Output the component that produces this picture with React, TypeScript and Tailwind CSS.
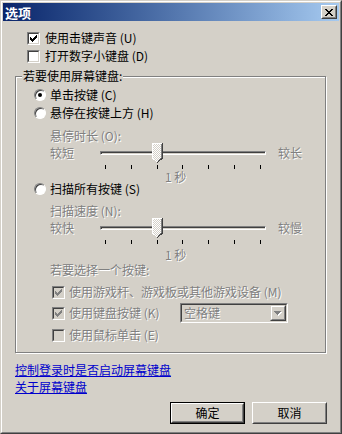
import React from 'react';

const dis = 'text-[#808080] [text-shadow:1px_1px_0_#fff]';

function Check({ checked, disabled }: { checked?: boolean; disabled?: boolean }) {
  const cols = [2, 3, 4, 3, 2, 1, 0];
  return (
    <div className="w-[13px] h-[13px] shrink-0 border border-t-[#808080] border-l-[#808080] border-r-white border-b-white">
      <div
        className={`w-full h-full flex items-center justify-center border border-t-[#404040] border-l-[#404040] border-r-[#d4d0c8] border-b-[#d4d0c8] ${disabled ? 'bg-[#d4d0c8]' : 'bg-white'}`}
      >
        {checked && (
          <svg width="7" height="7" viewBox="0 0 7 7" shapeRendering="crispEdges">
            {cols.map((y, x) => (
              <rect key={x} x={x} y={y} width="1" height="3" fill={disabled ? '#808080' : '#000'} />
            ))}
          </svg>
        )}
      </div>
    </div>
  );
}

function Radio({ on }: { on?: boolean }) {
  return (
    <div className="w-[12px] h-[12px] shrink-0 rounded-full bg-white border border-t-[#808080] border-l-[#808080] border-r-white border-b-white shadow-[inset_1px_1px_0_#404040] flex items-center justify-center">
      {on && <div className="w-[4px] h-[4px] rounded-full bg-black" />}
    </div>
  );
}

function Thumb() {
  return (
    <svg width="11" height="20" viewBox="0 0 11 20" shapeRendering="crispEdges">
      <defs>
        <pattern id="dither" width="2" height="2" patternUnits="userSpaceOnUse">
          <rect width="2" height="2" fill="#d4d0c8" />
          <rect width="1" height="1" fill="#fff" />
          <rect x="1" y="1" width="1" height="1" fill="#fff" />
        </pattern>
      </defs>
      <path d="M0 0 H11 V15 L5.5 20 L0 15 Z" fill="url(#dither)" />
      <path d="M0.5 15 V0.5 H10" stroke="#fff" fill="none" />
      <path d="M0.5 15 L5.5 19.5" stroke="#fff" fill="none" />
      <path d="M10.5 0 V15 L5.5 19.5" stroke="#404040" fill="none" />
      <path d="M9.5 1 V14.5 L5.5 18.5" stroke="#808080" fill="none" />
    </svg>
  );
}

function Slider({ left, right }: { left: string; right: string }) {
  return (
    <div className="flex items-center h-[20px] pl-[34px]">
      <span className={`w-[50px] text-[12px] leading-none ${dis}`}>{left}</span>
      <div className="relative w-[166px] h-[20px] flex items-center">
        <div className="w-full h-[4px] border border-t-[#808080] border-l-[#808080] border-r-white border-b-white">
          <div className="h-full border-t border-l border-[#404040]" />
        </div>
        <div className="absolute left-[52px] top-0">
          <Thumb />
        </div>
      </div>
      <span className={`ml-[12px] text-[12px] leading-none ${dis}`}>{right}</span>
    </div>
  );
}

function Ticks({ className }: { className: string }) {
  return (
    <div className={`flex justify-between w-[156px] h-[4px] ml-[89px] ${className}`}>
      {[0, 1, 2, 3, 4, 5, 6].map((i) => (
        <div key={i} className="w-px h-full bg-black" />
      ))}
    </div>
  );
}

function Button({ label, def }: { label: string; def?: boolean }) {
  const inner = (
    <div className="h-full border border-t-white border-l-white border-r-[#404040] border-b-[#404040]">
      <div className="h-full border border-t-[#d4d0c8] border-l-[#d4d0c8] border-r-[#808080] border-b-[#808080] flex items-center justify-center text-[12px] leading-none text-black">
        {label}
      </div>
    </div>
  );
  return def ? (
    <div className="w-[75px] h-[22px] border border-black">{inner}</div>
  ) : (
    <div className="w-[75px] h-[22px]">{inner}</div>
  );
}

export default function App() {
  return (
    <div className="w-[342px] h-[434px] bg-[#d4d0c8] font-['Noto_Sans_CJK_SC',sans-serif] border border-t-[#d4d0c8] border-l-[#d4d0c8] border-r-[#404040] border-b-[#404040]">
      <div className="h-full border border-t-white border-l-white border-r-[#808080] border-b-[#808080] p-px flex flex-col">
        {/* title bar */}
        <div className="h-[18px] shrink-0 flex items-center justify-between pl-[2px] pr-[2px] bg-gradient-to-r from-[#0a246a] to-[#a6caf0]">
          <span className="text-white text-[13px] font-bold leading-none">选项</span>
          <div className="w-[16px] h-[14px] border border-t-white border-l-white border-r-[#404040] border-b-[#404040]">
            <div className="h-full border border-t-[#d4d0c8] border-l-[#d4d0c8] border-r-[#808080] border-b-[#808080] bg-[#d4d0c8] flex items-center justify-center">
              <svg width="8" height="7" viewBox="0 0 8 7" shapeRendering="crispEdges">
                <path d="M0 0h2v1H0zM6 0h2v1H6zM1 1h2v1H1zM5 1h2v1H5zM2 2h4v1H2zM3 3h2v1H3zM2 4h4v1H2zM1 5h2v1H1zM5 5h2v1H5zM0 6h2v1H0zM6 6h2v1H6z" fill="#000" />
              </svg>
            </div>
          </div>
        </div>

        {/* top checkboxes */}
        <div className="mt-[8px] h-[18px] flex items-center pl-[24px] gap-[5px]">
          <Check checked />
          <span className="text-[12px] leading-none text-black">使用击键声音 (U)</span>
        </div>
        <div className="h-[18px] flex items-center pl-[24px] gap-[5px]">
          <Check />
          <span className="text-[12px] leading-none text-black">打开数字小键盘 (D)</span>
        </div>

        {/* group box */}
        <div className="relative mt-[11px] ml-[12px] w-[311px] border border-[#808080] shadow-[1px_1px_0_#fff,inset_1px_1px_0_#fff] pt-[11px] pb-[9px]">
          <span className="absolute left-[6px] -top-[7px] px-[1px] bg-[#d4d0c8] text-[12px] leading-none text-black">
            若要使用屏幕键盘:
          </span>

          <div className="h-[14px] flex items-center pl-[18px] gap-[4px]">
            <Radio on />
            <span className="text-[12px] leading-none text-black">单击按键 (C)</span>
          </div>
          <div className="mt-[4px] h-[14px] flex items-center pl-[18px] gap-[4px]">
            <Radio />
            <span className="text-[12px] leading-none text-black">悬停在按键上方 (H)</span>
          </div>
          <div className={`mt-[9px] h-[14px] flex items-center pl-[34px] text-[12px] leading-none ${dis}`}>
            悬停时长 (O):
          </div>
          <Slider left="较短" right="较长" />
          <Ticks className="mt-[2px]" />
          <div className={`mt-[3px] h-[10px] pl-[149px] text-[12px] leading-[10px] ${dis}`}>1 秒</div>

          <div className="h-[14px] flex items-center pl-[18px] gap-[4px]">
            <Radio />
            <span className="text-[12px] leading-none text-black">扫描所有按键 (S)</span>
          </div>
          <div className={`mt-[8px] h-[14px] flex items-center pl-[34px] text-[12px] leading-none ${dis}`}>
            扫描速度 (N):
          </div>
          <Slider left="较快" right="较慢" />
          <Ticks className="mt-[2px]" />
          <div className={`mt-[6px] h-[10px] pl-[149px] text-[12px] leading-[10px] ${dis}`}>1 秒</div>

          <div className={`mt-[3px] h-[14px] flex items-center pl-[34px] text-[12px] leading-none ${dis}`}>
            若要选择一个按键:
          </div>
          <div className="mt-[7px] h-[16px] flex items-center pl-[36px] gap-[4px]">
            <Check checked disabled />
            <span className={`text-[12px] leading-none ${dis}`}>使用游戏杆、游戏板或其他游戏设备 (M)</span>
          </div>
          <div className="mt-[3px] h-[20px] flex items-center pl-[36px] gap-[4px]">
            <Check checked disabled />
            <span className={`w-[107px] text-[12px] leading-none ${dis}`}>使用键盘按键 (K)</span>
            <div className="w-[108px] h-[20px] border border-t-[#808080] border-l-[#808080] border-r-white border-b-white">
              <div className="h-full border border-t-[#404040] border-l-[#404040] border-r-[#d4d0c8] border-b-[#d4d0c8] flex items-center justify-between pl-[2px]">
                <span className={`text-[12px] leading-none ${dis}`}>空格键</span>
                <div className="w-[16px] h-[16px] border border-t-[#d4d0c8] border-l-[#d4d0c8] border-r-[#404040] border-b-[#404040]">
                  <div className="h-full border border-t-white border-l-white border-r-[#808080] border-b-[#808080] flex items-center justify-center">
                    <svg width="8" height="5" viewBox="0 0 8 5" shapeRendering="crispEdges">
                      <path d="M1 1h7v1H1zM2 2h5v1H2zM3 3h3v1H3zM4 4h1v1H4z" fill="#fff" />
                      <path d="M0 0h7v1H0zM1 1h5v1H1zM2 2h3v1H2zM3 3h1v1H3z" fill="#808080" />
                    </svg>
                  </div>
                </div>
              </div>
            </div>
          </div>
          <div className="mt-[4px] h-[16px] flex items-center pl-[36px] gap-[4px]">
            <Check disabled />
            <span className={`text-[12px] leading-none ${dis}`}>使用鼠标单击 (E)</span>
          </div>
        </div>

        {/* links */}
        <div className="mt-[10px] ml-[12px] h-[14px] flex items-center">
          <a href="#" className="text-[12px] leading-none text-[#0000cc] underline">控制登录时是否启动屏幕键盘</a>
        </div>
        <div className="mt-[3px] ml-[12px] h-[14px] flex items-center">
          <a href="#" className="text-[12px] leading-none text-[#0000cc] underline">关于屏幕键盘</a>
        </div>

        {/* buttons */}
        <div className="mt-[8px] flex justify-end gap-[7px] pr-[12px]">
          <Button label="确定" def />
          <Button label="取消" />
        </div>
      </div>
    </div>
  );
}
